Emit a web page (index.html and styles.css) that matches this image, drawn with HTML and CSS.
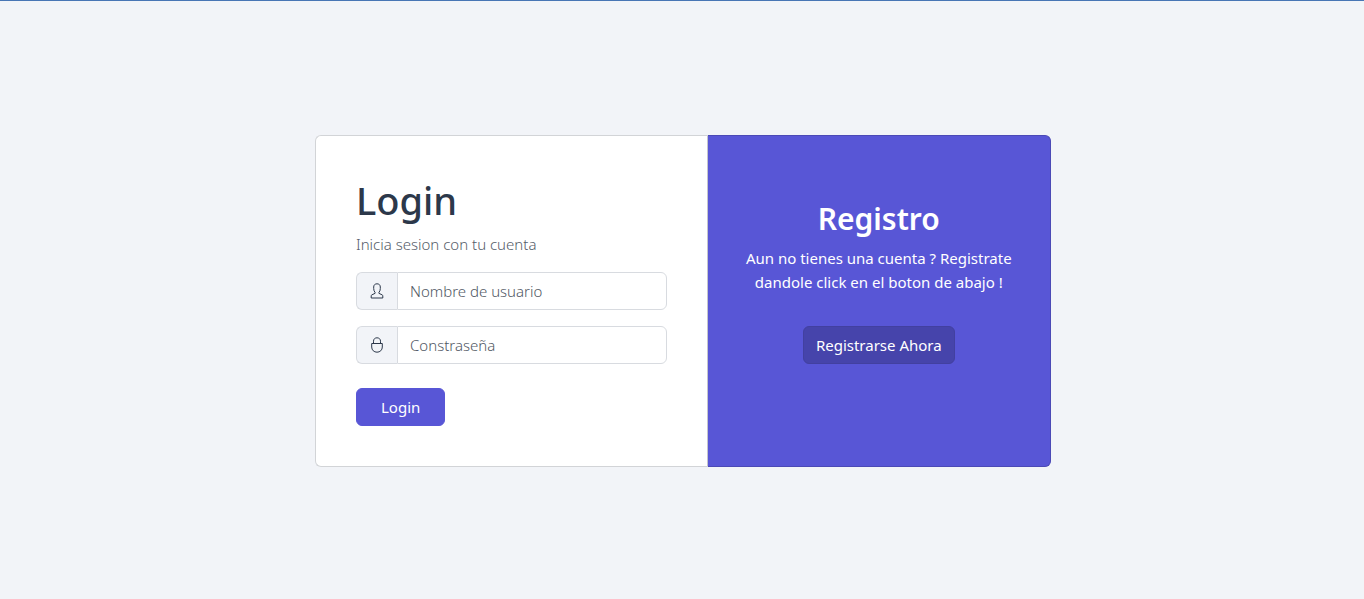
FILE: index.html
```html
<!DOCTYPE html>
<html lang="es">
<head>
<meta charset="utf-8">
<meta name="viewport" content="width=device-width, initial-scale=1">
<title>Login</title>
<link rel="stylesheet" href="styles.css">
</head>
<body class="page">
<main class="card-group">
  <section class="card card-login">
    <form>
      <h1 class="title">Login</h1>
      <p class="lead">Inicia sesion con tu cuenta</p>
      <div class="field">
        <label class="addon" for="user" aria-label="Nombre de usuario">
          <svg class="icon" viewBox="0 0 16 16" aria-hidden="true"><path d="M6.100 9.500C5.200 8.500 4.700 7.200 4.700 5.500V4C4.700 2 6 .8 8 .8s3.300 1.200 3.300 3.200v1.500c0 1.700-.5 3-1.400 4v.8l3.300 1.600c.4.200.6.500.6.900v2.200H2.200v-2.200c0-.4.2-.7.6-.9l3.300-1.600z"/></svg>
        </label>
        <input class="input" id="user" type="text" placeholder="Nombre de usuario">
      </div>
      <div class="field field-last">
        <label class="addon" for="pass" aria-label="Constraseña">
          <svg class="icon" viewBox="0 0 16 16" aria-hidden="true"><path d="M4.500 6.500V4.200C4.500 2 6 .8 8 .8s3.500 1.200 3.500 3.400v2.300M2.700 6.500h10.600V10c0 3.100-2.300 5.200-5.300 5.200S2.700 13.100 2.700 10z"/></svg>
        </label>
        <input class="input" id="pass" type="password" placeholder="Constraseña">
      </div>
      <button class="btn btn-login" type="submit">Login</button>
    </form>
  </section>
  <section class="card card-register">
    <h2 class="subtitle">Registro</h2>
    <p class="text">Aun no tienes una cuenta ? Registrate dandole click en el boton de abajo !</p>
    <button class="btn btn-register" type="button">Registrarse Ahora</button>
  </section>
</main>
</body>
</html>
```
FILE: styles.css
```css
* {
  box-sizing: border-box;
}

.page {
  margin: 0;
  min-height: 100vh;
  padding: 2px 12px 0 14px;
  border-top: 1px solid #4876b5;
  display: flex;
  align-items: center;
  justify-content: center;
  background: #f2f4f8;
  color: #2c384a;
  font: 15px/24px "Segoe UI", "Noto Sans", sans-serif;
}

.card-group {
  display: grid;
  grid-template-columns: 8fr 7fr;
  width: 100%;
  max-width: 736px;
}

.card {
  border: 1px solid #d2d4d7;
}

.card-login {
  padding: 40px;
  background: #fff;
  border-right-color: #c3c4cd;
  border-radius: 6px 0 0 6px;
}

.card-register {
  padding: 64px 32px;
  text-align: center;
  color: #fff;
  background: #5856d6;
  border-color: #4b49b6;
  border-left: 0;
  border-radius: 0 6px 6px 0;
}

.title,
.subtitle {
  margin: 0 0 8px;
  font-weight: 500;
}

.title {
  font-size: 38px;
  line-height: 48px;
}

.subtitle {
  font-size: 30px;
  line-height: 38px;
  font-weight: 600;
}

.lead {
  margin: 0 0 16px;
  color: #565d69;
  font-weight: 300;
}

.text {
  margin: 0 0 32px;
}

.field {
  display: flex;
  margin-bottom: 16px;
}

.field-last {
  margin-bottom: 24px;
}

.addon {
  display: flex;
  align-items: center;
  padding: 0 12px;
  background: #f2f4f8;
  border: 1px solid #d8dbe0;
  border-right: 0;
  border-radius: 6px 0 0 6px;
}

.icon {
  width: 16px;
  height: 16px;
  fill: none;
  stroke: #2c384a;
  stroke-width: 1;
}

.input {
  flex: 1;
  min-width: 0;
  height: 38px;
  padding: 0 12px;
  border: 1px solid #d8dbe0;
  border-radius: 0 6px 6px 0;
  background: #fff;
  color: inherit;
  font: inherit;
  font-weight: 300;
}

.input::placeholder {
  color: #505763;
  opacity: 1;
}

.btn {
  height: 38px;
  border: 1px solid #5856d6;
  border-radius: 6px;
  background: #5856d6;
  color: #fff;
  font: inherit;
  cursor: pointer;
}

.btn-login {
  padding: 0 24px;
}

.btn-register {
  padding: 0 12px;
  background: #4644ab;
  border-color: #4240a0;
}
```
